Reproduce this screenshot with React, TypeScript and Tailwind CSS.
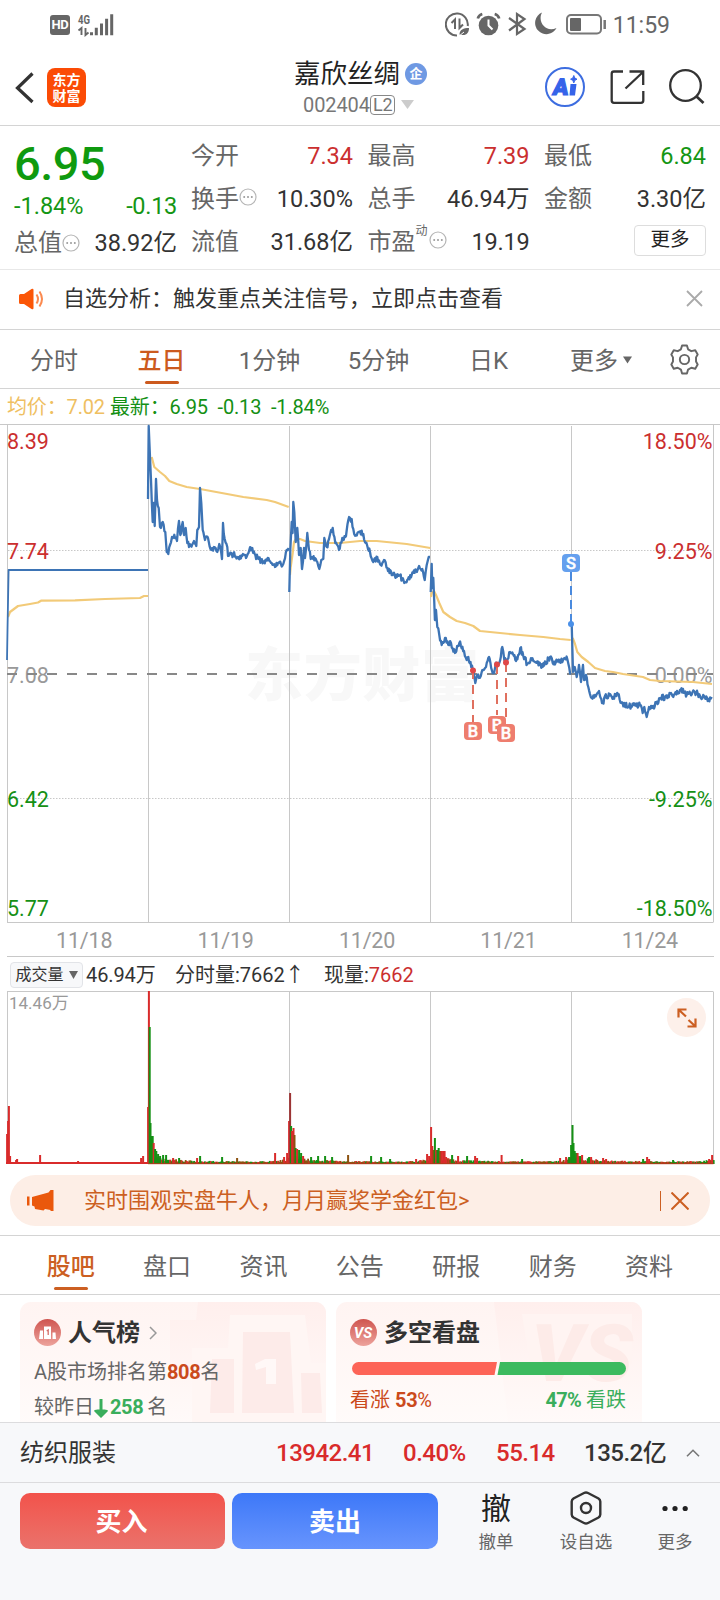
import React from 'react';

type Pt = [number, number];

const DAY_LINES = [148.5, 289.5, 430.5, 571.5];

const QUOTE_ROWS = [
  [
    { label: '今开', value: '7.34', color: 'text-[#cb2f2f]' },
    { label: '最高', value: '7.39', color: 'text-[#cb2f2f]' },
    { label: '最低', value: '6.84', color: 'text-[#149614]' },
  ],
  [
    { label: '换手', value: '10.30%', color: 'text-[#333]', more: true },
    { label: '总手', value: '46.94万', color: 'text-[#333]' },
    { label: '金额', value: '3.30亿', color: 'text-[#333]' },
  ],
];

const PERIODS = [
  { label: '分时', width: 'w-[108px]' },
  { label: '五日', width: 'w-[107px]', active: true },
  { label: '1分钟', width: 'w-[109px]' },
  { label: '5分钟', width: 'w-[109px]' },
  { label: '日K', width: 'w-[111px]' },
];

const INFO_TABS = ['股吧', '盘口', '资讯', '公告', '研报', '财务', '资料'];

// five trading days, one polyline each
const PRICE: Pt[][] = [
  [[7, 660], [7.5, 630], [8.6, 570], [148, 570]],
  [
    [148, 499], [148.7, 426], [150, 457], [151, 480], [152.7, 522], [153.7, 503], [154.7, 526], [156, 479], [157, 500],
    [158.7, 508], [160, 527], [162.7, 522], [165.3, 532], [166.7, 552], [168.3, 554], [170, 545], [172, 537], [175, 538],
    [177, 541], [179, 521], [180.3, 535], [182.7, 522], [184, 535], [185.7, 528], [187.3, 543], [190.7, 546], [194, 541],
    [196.3, 546], [197.3, 530], [199, 527], [200, 488], [201.3, 503], [202.7, 530], [205, 540], [208, 538], [211.3, 550],
    [214, 547], [217.3, 552], [219.3, 544], [222, 559], [223, 523], [224.7, 539], [227.3, 547], [228, 556], [233.3, 554],
    [237.3, 558], [243, 554], [246, 558], [249.3, 550], [252.3, 548], [254.7, 554], [258.3, 559], [263.3, 562],
    [267.7, 558], [271.7, 563], [275, 567], [278, 563], [283.3, 564], [286.7, 550], [288.7, 548],
  ],
  [
    [289.3, 592], [290.3, 550], [291.7, 522], [292.6, 533], [293.3, 502], [294.3, 512], [295.7, 542], [297.3, 528],
    [299, 555], [300.7, 548], [302, 569], [304, 548], [305, 558], [307.3, 533], [309, 550], [310.7, 559], [315, 558],
    [317.3, 562], [319.3, 569], [321.3, 560], [323.3, 559], [324.3, 538], [326.7, 547], [329, 539], [332.7, 528],
    [335.3, 543], [339, 550], [342.3, 538], [346, 536], [348.3, 520], [351.7, 519], [353.3, 529], [356, 535],
    [359.3, 532], [363.3, 534], [365.7, 543], [370, 552], [373.3, 562], [377.3, 557], [380.7, 565], [384, 560],
    [387.3, 568], [391.7, 575], [400, 575], [404.3, 583], [411.7, 575], [418.3, 568], [422.3, 569], [424.7, 580],
    [426.7, 565], [428.7, 557], [430, 557],
  ],
  [
    [430.7, 592], [431.7, 564], [432.3, 588], [433.3, 578], [434.3, 603], [434.9, 620], [436, 610], [437.3, 627],
    [439.3, 635], [441.7, 645], [445, 638], [448.3, 645], [451, 643], [455, 653], [459.3, 643], [464, 651], [466.7, 660],
    [468.3, 657], [472.7, 669], [475.3, 683], [477.3, 675], [479, 678], [481.7, 672], [486, 667], [489, 657],
    [493.3, 673], [496.7, 663], [499.3, 663], [502.3, 647], [504.3, 660], [506.7, 662], [510, 652], [513, 654],
    [516, 661], [520.3, 648], [523.3, 656], [527.3, 664], [531.7, 660], [535, 662], [542.7, 667], [550, 657],
    [552.7, 663], [560, 660], [567.3, 659], [569.3, 668], [571, 673],
  ],
  [
    [571.7, 624], [573, 672], [574.7, 667], [576.7, 677], [579, 665], [581, 682], [583, 665], [584, 680], [586, 675],
    [588.3, 687], [591.7, 698], [595, 695], [599, 691], [602.7, 703], [605, 696], [613.3, 697], [618, 694], [621.3, 703],
    [628.3, 707], [633.3, 705], [640, 705], [642.7, 713], [644.3, 707], [646.7, 717], [649, 707], [653.3, 706],
    [658.3, 703], [660, 698], [665, 697], [671, 693], [673.3, 697], [680.7, 690], [686.7, 695], [694, 691], [700, 696],
    [704, 696], [707.7, 701], [711.7, 697],
  ],
];

const AVERAGE: Pt[][] = [
  [[8, 617], [10, 612], [18, 606], [30, 604], [38, 602.5], [41, 600.7], [75, 600.3], [105, 599], [140, 598], [144, 596], [148, 596]],
  [
    [151.7, 457], [154.3, 467], [160, 472], [165, 476], [169.3, 481], [176.7, 484], [186.7, 487], [200, 489],
    [221.7, 493], [243.3, 497], [266.7, 500], [275, 502], [288.7, 507],
  ],
  [
    [290, 575], [290.7, 567], [292.7, 553], [294, 542], [295.7, 539], [300, 539], [305, 541], [320, 543], [340, 543],
    [360, 541], [376.7, 541], [406.7, 544], [430.3, 548],
  ],
  [
    [431, 597], [431.7, 593], [434, 591], [436, 595], [439.3, 603], [443.3, 612], [450, 617], [456.7, 621], [465, 623],
    [473.3, 626], [480, 631], [500, 633], [520, 635], [543.3, 637], [560, 639], [570.7, 640],
  ],
  [
    [572.7, 638], [575, 644], [577.3, 652], [581.7, 657], [588.3, 662], [595, 668], [605, 671], [613, 672], [623, 674],
    [643, 677], [650, 680], [660, 681], [693, 682], [712, 684],
  ],
];

// stable pseudo random number in 0..1
const noise = (n: number) => {
  const v = Math.sin(n * 127.1 + 3.7) * 43758.5453;
  return v - Math.floor(v);
};

const toPath = (pts: Pt[]) => 'M' + pts.map((p) => p.join(' ')).join('L');

const jagged = (pts: Pt[]) => {
  const out: Pt[] = [];
  pts.forEach((p, i) => {
    out.push(p);
    const next = pts[i + 1];
    if (!next) return;
    const steps = Math.floor((next[0] - p[0]) / 0.7);
    for (let s = 1; s < steps; s++) {
      const t = s / steps;
      const x = p[0] + (next[0] - p[0]) * t;
      const y = p[1] + (next[1] - p[1]) * t + (noise(x) - 0.5) * 6;
      out.push([+x.toFixed(1), +y.toFixed(1)]);
    }
  });
  return toPath(out);
};

const RED = '#d92b2b';
const GREEN = '#159015';
const BROWN = '#8c5210';

// x, height, color
const SPIKES: [number, number, string][] = [
  [7, 30, RED], [8, 43, RED], [8.8, 58, RED], [10, 8, RED], [16, 4, RED], [17, 5, RED], [40, 9, RED], [78, 3, RED], [141, 6, RED], [143, 8, RED],
  [148, 57, RED], [148.8, 173, RED], [149.6, 137, GREEN], [150.4, 41, GREEN], [151.6, 28, GREEN], [152.6, 28, GREEN],
  [153.6, 21, RED], [155, 15, GREEN], [156.2, 13, GREEN], [158, 10, GREEN], [160, 8, GREEN], [163, 9, GREEN], [166, 9, GREEN],
  [173, 6, RED], [179, 6, GREEN], [197, 6, RED], [200, 8, GREEN], [222, 7, GREEN], [237, 6, BROWN], [275, 11, RED],
  [284, 7, RED], [287, 11, RED], [289, 43, RED], [290, 71, '#9c3434'], [291, 38, GREEN], [292, 33, RED], [293.4, 36, RED], [294.4, 29, BROWN],
  [295.5, 16, GREEN], [297, 15, RED], [299, 14, GREEN], [301, 11, GREEN], [303, 8, RED], [311, 7, GREEN], [318, 8, GREEN],
  [325, 8, GREEN], [332, 7, GREEN], [348, 9, BROWN], [371, 8, GREEN], [381, 7, GREEN], [390, 5, GREEN], [416, 5, RED],
  [427, 10, RED], [429, 8, RED], [431, 37, RED], [432.2, 18, RED], [433.4, 14, BROWN], [434.8, 26, GREEN], [436, 14, RED],
  [437.4, 14, GREEN], [438.6, 16, GREEN], [440, 13, BROWN], [441.5, 13, RED], [443, 13, RED], [444.5, 13, RED],
  [446, 7, RED], [452, 9, GREEN], [458, 8, RED], [467, 8, GREEN], [475, 8, RED], [477, 6, RED], [501.5, 9, RED],
  [522, 5, GREEN], [560, 6, RED], [566, 7, RED], [569, 7, GREEN], [571, 19, GREEN], [572.4, 39, GREEN], [573.4, 21, GREEN],
  [574.6, 13, GREEN], [576, 11, GREEN], [577.5, 11, RED], [580, 8, GREEN], [582, 9, RED], [589, 7, GREEN], [591, 7, RED],
  [603, 6, RED], [606, 5, RED], [643, 5, GREEN], [647, 7, RED], [649, 5, RED], [673, 4, GREEN], [709, 5, RED], [712, 9, RED],
];

const VolumeBars = () => {
  const bars: React.ReactNode[] = [];
  for (let x = 150; x < 713; x += 1.2) {
    const since = (x - 148.5) % 141;
    const base = 1.5 + 7 * Math.exp(-since / 22) + (x < 571 ? 5 : 3) * Math.exp(-(141 - since) / 8);
    const h = 1.2 + base * (0.3 + 0.7 * noise(x * 1.7));
    const pick = noise(x * 3.1);
    const fill = pick < 0.35 ? GREEN : pick < 0.6 ? RED : BROWN;
    bars.push(<rect key={x} x={x} y={1164 - h} width="1.8" height={h} fill={fill} />);
  }
  return (
    <>
      <rect x="6" y="1162" width="142" height="2" fill={RED} />
      <rect x="148" y="1162.300" width="565.5" height="1.7" fill="#9a4a16" />
      {bars}
      {SPIKES.map(([x, h, fill], i) => (
        <rect key={i} x={x - 0.9} y={1164 - h} width="2" height={h} fill={fill} />
      ))}
      <path d="M148 1163.700h565.500" stroke="#b03a1c" strokeWidth="1" />
    </>
  );
};

const Bubble = () => (
  <svg className="h-[18px] w-[18px] shrink-0" viewBox="0 0 18 18">
    <circle cx="9" cy="9" r="8" fill="none" stroke="#b5b5b5" strokeWidth="1.2" />
    <circle cx="5.2" cy="9" r="1" fill="#999" />
    <circle cx="9" cy="9" r="1" fill="#999" />
    <circle cx="12.8" cy="9" r="1" fill="#999" />
  </svg>
);

const StatusBar = () => (
  <div className="flex h-[50px] items-center text-[#666]">
    <div className="ml-[50px] flex h-[20px] w-[20px] items-center justify-center rounded-[3px] bg-[#666] text-[13px] font-bold tracking-[-0.4px] text-white">HD</div>
    <svg className="ml-[7px] h-[24px] w-[38px]" viewBox="0 0 38 24">
      <text x="1" y="10.5" fontSize="12" fontWeight="700" fill="#666" textLength="12" lengthAdjust="spacingAndGlyphs">4G</text>
      <path d="M1.500 17.500l3-2.500v7M8.5 15v7l3-2.500" fill="none" stroke="#666" strokeWidth="1.900" />
      <path d="M14.5 19.2v3M19.3 14.8v7.4M24.5 10.5v11.7M29.6 5.7v16.5M34.7 1.2v21" stroke="#666" strokeWidth="3" />
    </svg>
    <div className="flex-1" />
    <svg className="h-[26px] w-[162px]" viewBox="444 12 162 26">
      <g fill="none" stroke="#666" strokeWidth="2">
        <path d="M456 35.500A11 11 0 1 1 466.700 26" />
        <path d="M450.500 23l3.500-3.500v9.500M458.500 18.500v9.500l3.500-3.500" />
      </g>
      <path d="M458.500 34.500c0-5 4-6.500 9.500-6.500 0 5-3 8.500-9.500 6.500z" fill="#666" />
      <path d="M457 37l6-5" stroke="#fff" strokeWidth="1" />
      <circle cx="487.500" cy="25.500" r="9.800" fill="#666" />
      <path d="M476.800 18.500q1-3.500 4.500-4.500M498.200 18.500q-1-3.500-4.500-4.500" stroke="#666" strokeWidth="2.700" fill="none" />
      <path d="M487.500 19.500v6l4 4" stroke="#fff" strokeWidth="2" fill="none" />
      <path d="M508 18l15.500 11-7.500 5V14l7.500 5L508 30.500" fill="none" stroke="#666" strokeWidth="2.200" />
      <path d="M541 12.500a11.300 11.300 0 1 0 14.500 15.500C545 33 536 22 541 12.500z" fill="#666" />
      <rect x="566" y="15" width="34" height="18.500" rx="4" fill="none" stroke="#777" strokeWidth="2" />
      <rect x="569" y="18" width="11" height="13" rx="1" fill="#666" />
      <path d="M603.700 20v9" stroke="#777" strokeWidth="2.500" />
    </svg>
    <span className="ml-[6px] mr-[50px] text-[23px] leading-none">11:59</span>
  </div>
);

const Header = () => (
  <div className="flex h-[76px] items-center border-b border-[#d4d4d4]">
    <svg className="ml-[15px] h-[32px] w-[19px]" viewBox="0 0 19 32">
      <path d="M17.500 1.500L2.500 16l15 14" fill="none" stroke="#333" strokeWidth="3.200" />
    </svg>
    <div className="ml-[13px] flex h-[39px] w-[39px] flex-col items-center justify-center rounded-[8px] bg-[#fb4b05] text-[14px] font-bold leading-[16px] text-white">
      <span>东方</span>
      <span>财富</span>
    </div>
    <div className="ml-[194px] flex w-[150px] flex-col pb-[2px] pl-[14px]">
      <div className="flex h-[36px] items-center whitespace-nowrap">
        <span className="text-[26.5px] leading-[36px] text-[#222]">嘉欣丝绸</span>
        <span className="ml-[5px] flex h-[22px] w-[22px] shrink-0 items-center justify-center rounded-full bg-[#6f99e3] text-[13px] font-bold leading-none text-white">企</span>
      </div>
      <div className="flex h-[26px] items-center pl-[9px] text-[20px] text-[#777]">
        <span className="w-[67px] tracking-[-0.1px]">002404</span>
        <span className="flex h-[20px] items-center rounded-[4px] border border-[#888] px-[2px] text-[18px] leading-none tracking-[-0.3px]">L2</span>
        <svg className="ml-[6px] h-[9px] w-[13px]" viewBox="0 0 13 9"><path d="M0 0h13L6.500 9z" fill="#ccc" /></svg>
      </div>
    </div>
    <div className="flex-1" />
    <svg className="h-[42px] w-[162px]" viewBox="544 67 162 42">
      <circle cx="565" cy="87" r="19" fill="none" stroke="#3d6de0" strokeWidth="2" />
      <text x="0" y="0" fontSize="23" fontWeight="900" fill="#3563e9" stroke="#3563e9" strokeWidth="1.200" textLength="15.500" lengthAdjust="spacingAndGlyphs" transform="translate(552 95) skewX(-8)">A</text>
      <path d="M570.500 84h6l-1.500 11.500h-5.500z" fill="#3563e9" />
      <path d="M573.800 75.500q.4 3.300 3.200 3.700-2.800.4-3.200 3.700-.4-3.300-3.200-3.700 2.800-.4 3.200-3.700z" fill="#3563e9" stroke="#3563e9" />
      <path d="M623 71.500h-9q-2.300 0-2.300 2.300v26.700q0 2.300 2.300 2.300h27q2.300 0 2.300-2.300V91M629.500 71.500h13.700V85M643 72L625.500 88.500" fill="none" stroke="#333" strokeWidth="2.300" />
      <circle cx="685.500" cy="85.500" r="15.300" fill="none" stroke="#333" strokeWidth="2.300" />
      <path d="M696 96l7.500 7" stroke="#333" strokeWidth="2.700" />
    </svg>
    <div className="w-[14px]" />
  </div>
);

const Quote = () => (
  <div className="flex h-[144px] border-b border-[#e8e8e8] pl-[14px] text-[24px] leading-[42px]">
    <div className="flex w-[163px] flex-col pt-[13px]">
      <div className="h-[47px] text-[47px] font-medium leading-[49px] tracking-[-0.5px] text-[#0f9a0f]">6.95</div>
      <div className="flex h-[40px] items-center justify-between text-[23.5px] text-[#149614]">
        <span>-1.84%</span>
        <span className="tracking-[-0.3px]">-0.13</span>
      </div>
      <div className="flex h-[33px] items-center">
        <span className="text-[#666]">总值</span>
        <Bubble />
        <span className="ml-auto text-[23.500px] text-[#333]">38.92亿</span>
      </div>
    </div>
    <div className="ml-[14px] flex flex-1 flex-col pt-[8px]">
      {QUOTE_ROWS.map((row, i) => (
        <div key={i} className="grid h-[43px] grid-cols-[162px_162px_162px] gap-x-[14.500px]">
          {row.map((cell) => (
            <div key={cell.label} className="flex items-center">
              <span className="text-[#666]">{cell.label}</span>
              {cell.more && <span className="-mt-[4px] flex"><Bubble /></span>}
              <span className={`ml-auto text-[23.5px] ${cell.color}`}>{cell.value}</span>
            </div>
          ))}
        </div>
      ))}
      <div className="grid h-[43px] grid-cols-[162px_162px_162px] gap-x-[14.500px]">
        <div className="flex items-center">
          <span className="text-[#666]">流值</span>
          <span className="ml-auto text-[23.500px] text-[#333]">31.68亿</span>
        </div>
        <div className="flex items-center">
          <span className="text-[#666]">市盈</span>
          <span className="-mt-[22px] text-[12px] leading-none text-[#666]">动</span>
          <span className="-mt-[4px] ml-[1px] flex"><Bubble /></span>
          <span className="ml-auto text-[23.500px] tracking-[-0.2px] text-[#333]">19.19</span>
        </div>
        <div className="flex items-center justify-end pb-[3px]">
          <div className="flex h-[31px] w-[72px] items-center justify-center rounded-[4px] border border-[#ddd] text-[19.500px] text-[#222]">更多</div>
        </div>
      </div>
    </div>
  </div>
);

const Notice = () => (
  <div className="flex h-[60px] items-center border-b border-[#d4d4d4]">
    <svg className="-mt-[2px] ml-[19px] h-[22px] w-[26px]" viewBox="0 0 26 22">
      <path d="M0 7.500q0-1.500 1.500-1.500H5L12.500 1q2-1 2 1v18q0 2-2 1L5 16H1.500Q0 16 0 14.500z" fill="#fb5607" />
      <path d="M17.500 6.500q3 4.500 0 9M20.500 3.500q5 7.500 0 15" fill="none" stroke="#fb8a50" strokeWidth="2" />
    </svg>
    <span className="-mt-[1px] ml-[18px] text-[22px] leading-[30px] text-[#333]">自选分析：触发重点关注信号，立即点击查看</span>
    <svg className="-mt-[2px] ml-auto mr-[17px] h-[17px] w-[17px]" viewBox="0 0 17 17">
      <path d="M1 1l15 15M16 1L1 16" stroke="#aaa" strokeWidth="1.800" />
    </svg>
  </div>
);

const PeriodTabs = () => (
  <div className="flex h-[59px] border-b border-[#d4d4d4] text-[24px] text-[#666]">
    {PERIODS.map((p) => (
      <div key={p.label} className={`flex flex-col items-center pt-[11px] ${p.width}`}>
        <span className={`leading-[40px] ${p.active ? 'font-medium text-[#cc5a1e]' : ''}`}>{p.label}</span>
        {p.active && <span className="h-[3px] w-[34px] rounded-full bg-[#cc5a1e]" />}
      </div>
    ))}
    <div className="flex h-[40px] items-center pl-[26px] pt-[22px]">
      <span className="leading-[40px]">更多</span>
      <svg className="-mt-[2px] ml-[5px] h-[8px] w-[9px]" viewBox="0 0 10 8"><path d="M0 0h10L5 8z" fill="#666" /></svg>
    </div>
    <svg className="ml-auto mr-[20px] mt-[14px] h-[31px] w-[31px]" viewBox="0 0 31 32" fill="none" stroke="#666" strokeWidth="2" strokeLinejoin="round">
      <path d="M13 1.500h5l1.200 4 3.300 1.900 4.100-1 2.500 4.400-1.700 3v4.300l1.700 3-2.500 4.400-4.100-1-3.300 1.900-1.200 4h-5l-1.200-4-3.300-1.900-4.100 1-2.500-4.400 1.700-3v-4.300l-1.700-3 2.500-4.400 4.100 1 3.300-1.900z" />
      <circle cx="15.500" cy="16" r="4.800" />
    </svg>
  </div>
);

const Marker = ({ x, y, label, color }: { x: number; y: number; label: string; color: string }) => (
  <g>
    <rect x={x - 9} y={y - 9} width="18" height="18" rx="4" fill={color} />
    <text x={x} y={y + 6} textAnchor="middle" fontSize="16.500" fontWeight="500" fill="#fff" stroke="#fff" strokeWidth="0.400">{label}</text>
  </g>
);

const PriceChart = () => (
  <svg className="block h-[499px] w-[720px]" viewBox="0 424 720 499">
    <text x="245" y="696" fontSize="58" fontWeight="900" fill="#f8f8f8" textLength="234">东方财富</text>
    <g stroke="#c8c8c8">
      <path d="M0 424.500h720M7 922.500h706.500" />
      <path d="M7.500 425v497M713.500 425v497" />
      {DAY_LINES.map((x) => <path key={x} d={`M${x} 426v496`} />)}
      <path d="M8 550.500h705M8 798.500h705" strokeDasharray="1.500 1.500" />
    </g>
    <g fontSize="21.500">
      <g fill="#cb2f2f">
        <text x="7" y="449">8.39</text>
        <text x="7" y="559">7.74</text>
        <text x="712.500" y="449" textAnchor="end">18.50%</text>
        <text x="712.500" y="559" textAnchor="end">9.25%</text>
      </g>
      <g fill="#159015">
        <text x="7" y="807">6.42</text>
        <text x="7" y="916">5.77</text>
        <text x="712.500" y="807" textAnchor="end">-9.25%</text>
        <text x="712.500" y="916" textAnchor="end">-18.50%</text>
      </g>
      <g fill="#999">
        <text x="7" y="683">7.08</text>
        <text x="712.500" y="683" textAnchor="end">0.00%</text>
      </g>
    </g>
    <path d="M7 674h706" stroke="#888" strokeWidth="1.800" strokeDasharray="10 10" />
    {AVERAGE.map((pts, i) => <path key={i} d={toPath(pts)} fill="none" stroke="#f2ca78" strokeWidth="2.200" strokeLinejoin="round" />)}
    {PRICE.map((pts, i) => (
      <path key={i} d={i === 0 ? toPath(pts) : jagged(pts)} fill="none" stroke="#3d74b5" strokeWidth={i === 0 ? 1.8 : 2.3} strokeLinejoin="round" />
    ))}
    <g stroke="#e0705f" strokeWidth="2" strokeDasharray="9 6">
      <path d="M473 670v52M497 665v50M506 663v60" />
    </g>
    <g fill="#e04848">
      <circle cx="473" cy="670.500" r="3" />
      <circle cx="497" cy="664.500" r="3" />
      <circle cx="506" cy="662.500" r="3" />
    </g>
    <path d="M571 572v51" stroke="#4a8ade" strokeWidth="2" strokeDasharray="9 5" />
    <circle cx="571" cy="624" r="3" fill="#4a90e8" />
    <Marker x={473} y={731} label="B" color="#ee7d6e" />
    <Marker x={497} y={725} label="B" color="#ee7d6e" />
    <Marker x={506} y={733} label="B" color="#ee7d6e" />
    <Marker x={571} y={563} label="S" color="#65a0ee" />
  </svg>
);

const VolumeChart = () => (
  <div className="relative h-[175px]">
    <svg className="block h-[175px] w-[720px]" viewBox="0 991 720 175">
      <g stroke="#c8c8c8">
        <path d="M7 991.500h706.500M7.500 992v172M713.500 992v172" />
        {DAY_LINES.map((x) => <path key={x} d={`M${x} 992v172`} />)}
      </g>
      <text x="9" y="1009" fontSize="17" fill="#999">14.46万</text>
      <VolumeBars />
    </svg>
    <div className="absolute right-[14px] top-[7px] flex h-[39px] w-[39px] items-center justify-center rounded-full bg-[#fdf0ea]">
      <svg className="h-[20px] w-[20px]" viewBox="0 0 20 20" fill="none" stroke="#cc5f22" strokeWidth="2.200">
        <path d="M9.500 1.500h-8v8M1.500 1.500L9 8.500M10.500 18.500h8v-8M18.500 18.500L11.500 12" />
      </svg>
    </div>
  </div>
);

const Promo = () => (
  <div className="mx-[10px] mt-[9px] flex h-[51px] items-center rounded-full bg-[#fdeee6]">
    <svg className="-mt-[1px] ml-[17px] h-[23px] w-[27px]" viewBox="0 0 27 23" fill="#ea580c">
      <path d="M0 7.500h2.500v9H0zM5 8L21.500 3.500 23.500 1h3v21h-3v-1l-5.500-1-1.500 1.500L8 20l-.500-2.500L5 16.500z" />
    </svg>
    <span className="ml-[30px] text-[22px] leading-[30px] text-[#cc5f22]">实时围观实盘牛人，月月赢奖学金红包&gt;</span>
    <span className="ml-auto h-[20px] w-[1px] bg-[#cc5f22]" />
    <svg className="ml-[10px] mr-[21px] h-[18px] w-[18px]" viewBox="0 0 18 18">
      <path d="M.5 .5l17 17M17.500 .5l-17 17" stroke="#cc5f22" strokeWidth="2" />
    </svg>
  </div>
);

const InfoTabs = () => (
  <div className="mt-[9px] flex h-[60px] border-y border-[#d4d4d4] pl-[22.500px] text-[24px] text-[#666]">
    {INFO_TABS.map((tab, i) => (
      <div key={tab} className="flex w-[96.400px] flex-col items-center pt-[11px]">
        <span className={`leading-[40px] ${i === 0 ? 'font-medium text-[#cc5f22]' : ''}`}>{tab}</span>
        {i === 0 && <span className="h-[3px] w-[34px] rounded-full bg-[#cc5f22]" />}
      </div>
    ))}
  </div>
);

const Cards = () => (
  <div className="flex h-[127px] gap-[10px] overflow-hidden pl-[20px] pt-[7px] text-[20px] text-[#666]">
    <div className="relative h-[140px] w-[306px] overflow-hidden rounded-[11px] bg-gradient-to-b from-[#fff4f2] to-[#fffcfb] px-[14px] pt-[13px]">
      <svg className="absolute left-[150px] top-0 h-[120px] w-[156px]" viewBox="170 1302 156 120">
        <defs>
          <linearGradient id="fade" x1="0" y1="0" x2="0" y2="1">
            <stop offset="0" stopColor="#ffefed" />
            <stop offset="1" stopColor="#fffaf9" />
          </linearGradient>
        </defs>
        <path d="M198 1302h128v120H170v-102h26z" fill="url(#fade)" />
        <path d="M230 1315h75l6 48h15v59H192v-74h36z" fill="#fff6f4" />
        <path d="M243 1332h47l4 81h-52zM212 1359h22v54h-24zM301 1373h19l2 40h-20z" fill="#fdebe9" />
        <path d="M255 1364l10-5h11v25h-10v-17l-10 3z" fill="#fff8f7" />
      </svg>
      <div className="relative flex h-[36px] items-center">
        <svg className="-mt-[2px] h-[27px] w-[27px]" viewBox="0 0 27 27">
          <defs>
            <linearGradient id="badge" x1="0" y1="0" x2="0" y2="1">
              <stop offset="0" stopColor="#cf5550" />
              <stop offset="1" stopColor="#eda39c" />
            </linearGradient>
          </defs>
          <circle cx="13.500" cy="13.500" r="13.500" fill="url(#badge)" />
          <path d="M6 11.500h3v8.500H5zM10 7.500h7v12.500h-7zM18.500 13.500h3l.5 6.500h-3.500z" fill="#fff" />
          <path d="M12.700 12l1.500-1v5" stroke="#d4706a" fill="none" strokeWidth="1.300" />
        </svg>
        <span className="ml-[7px] text-[24px] font-bold leading-[36px] text-[#333]">人气榜</span>
        <svg className="ml-[9px] h-[14px] w-[8px]" viewBox="0 0 8 14"><path d="M1 1l6 6-6 6" fill="none" stroke="#999" strokeWidth="1.500" /></svg>
      </div>
      <div className="relative mt-[6px] h-[30px] leading-[30px]">
        A股市场排名第<span className="font-bold tracking-[-0.4px] text-[#cb4a1c]">808</span>名
      </div>
      <div className="relative mt-[5px] flex h-[30px] items-center leading-[30px]">
        较昨日
        <svg className="mt-[3px] h-[19px] w-[14px]" viewBox="0 0 14 19"><path d="M5.500 0h3v10.500Q14 10 14 12L7 19 0 12q0-2 5.500-1.500z" fill="#3aae5c" /></svg>
        <span className="ml-[2px] font-bold tracking-[-0.4px] text-[#3aae5c]">258</span>
        <span className="ml-[4px]">名</span>
      </div>
    </div>
    <div className="relative h-[140px] w-[306px] overflow-hidden rounded-[11px] bg-gradient-to-b from-[#fff4f2] to-[#fffcfb] px-[14px] pt-[13px]">
      <svg className="absolute left-[150px] top-0 h-[120px] w-[156px]" viewBox="486 1302 156 120">
        <path d="M494 1302h148v120H508z" fill="url(#fade)" />
        <path d="M522 1314h110v50H530z" fill="#fff4f2" />
        <text x="531" y="1381" fontSize="80" fontWeight="900" fontStyle="italic" fill="#fdebe8" textLength="102" lengthAdjust="spacingAndGlyphs">VS</text>
      </svg>
      <div className="relative flex h-[36px] items-center">
        <svg className="-mt-[2px] h-[27px] w-[27px]" viewBox="0 0 27 27">
          <circle cx="13.500" cy="13.500" r="13.500" fill="url(#badge)" />
          <text x="13" y="19" textAnchor="middle" fontSize="15" fontWeight="700" fontStyle="italic" fill="#fff">VS</text>
        </svg>
        <span className="ml-[7px] text-[24px] font-bold leading-[36px] text-[#333]">多空看盘</span>
      </div>
      <svg className="relative ml-[2px] mt-[11px] block h-[13px] w-[274px]" viewBox="0 0 274 13">
        <path d="M6.500 0H145l-2.500 13h-136a6.500 6.500 0 0 1 0-13z" fill="#fd6457" />
        <path d="M148 0h119.500a6.500 6.500 0 0 1 0 13h-122z" fill="#3cba5f" />
      </svg>
      <div className="relative mt-[10px] flex w-[276px] justify-between leading-[30px]">
        <span className="text-[#cb4a1c]">看涨 <b className="tracking-[-0.3px]">53</b>%</span>
        <span className="text-[#3aae5c]"><b className="tracking-[-0.7px]">47%</b> 看跌</span>
      </div>
    </div>
  </div>
);

const SectorRow = () => (
  <div className="flex h-[61px] items-center border-y border-[#dcdcde] bg-[#f7f8fa] pl-[20px] pt-[1px] text-[24px] font-medium leading-[40px] tracking-[-0.5px] text-[#d92b2b]">
    <span className="w-[256px] font-normal tracking-normal text-[#333]">纺织服装</span>
    <span className="w-[127px]">13942.41</span>
    <span className="w-[93px]">0.40%</span>
    <span className="w-[88px]">55.14</span>
    <span className="w-[102px] text-[#333]">135.2亿</span>
    <svg className="h-[8px] w-[14px]" viewBox="0 0 14 8"><path d="M1 7.300l6-6 6 6" fill="none" stroke="#777" strokeWidth="1.600" /></svg>
  </div>
);

const TradeBar = () => (
  <div className="flex h-[118px] items-start bg-[#f7f8fa] pl-[20px] pt-[10px]">
    <button className="h-[56px] w-[205px] rounded-[10px] bg-gradient-to-b from-[#f2524b] to-[#ea726b] pr-[2px] pt-[2px] text-[26px] font-bold text-white">买入</button>
    <button className="ml-[7px] h-[56px] w-[206px] rounded-[10px] bg-gradient-to-b from-[#3d78f8] to-[#6794fd] pt-[2px] text-[26px] font-bold text-white">卖出</button>
    <div className="ml-[28px] flex w-[60px] flex-col items-center">
      <span className="h-[36px] text-[30px] leading-[32px] text-[#222]">撤</span>
      <span className="text-[17.500px] leading-[26px] text-[#666]">撤单</span>
    </div>
    <div className="ml-[30px] flex w-[60px] flex-col items-center">
      <svg className="-mt-[2px] h-[34px] w-[32px]" viewBox="0 0 32 34" fill="none" stroke="#333" strokeWidth="2.400">
        <path d="M16 1.500q1 0 2 .5l10.500 5.500q1.800 1.200 1.800 3v13q0 1.800-1.800 3L18 32q-2 1-4 0L3.500 26.500q-1.800-1.200-1.800-3v-13q0-1.800 1.800-3L14 2q1-.5 2-.5z" />
        <circle cx="16" cy="17" r="5" />
      </svg>
      <span className="mt-[4px] whitespace-nowrap text-[17.500px] leading-[26px] text-[#666]">设自选</span>
    </div>
    <div className="ml-[29px] flex w-[60px] flex-col items-center">
      <svg className="h-[36px] w-[26px]" viewBox="0 0 26 36" fill="#222">
        <circle cx="3" cy="15.500" r="2.600" />
        <circle cx="13" cy="15.500" r="2.600" />
        <circle cx="23.200" cy="15.500" r="2.600" />
      </svg>
      <span className="text-[17.500px] leading-[26px] text-[#666]">更多</span>
    </div>
  </div>
);

export default function App() {
  return (
    <div className="h-[1600px] w-[720px] overflow-hidden bg-white font-[Roboto,'Noto_Sans_CJK_SC',sans-serif]">
      <StatusBar />
      <Header />
      <Quote />
      <Notice />
      <PeriodTabs />
      <div className="flex h-[35px] items-center whitespace-pre pl-[7px] pt-[1px] text-[20px] leading-[30px] tracking-[-0.15px] text-[#149014]">
        <span className="text-[#efbf62]">均价：7.02</span>
        <span className="ml-[5px]">最新：6.95  -0.13  -1.84%</span>
      </div>
      <PriceChart />
      <div className="ml-[7px] mr-[6px] flex h-[34px] items-center border-b border-[#c8c8c8] pt-[4px] text-[21.500px] text-[#999]">
        {['11/18', '11/19', '11/20', '11/21', '11/24'].map((d) => (
          <span key={d} className="flex-1 pl-[13px] text-center tracking-[-0.2px]">{d}</span>
        ))}
      </div>
      <div className="flex h-[34px] items-center pl-[10px] pt-[1px] text-[20px] leading-[30px] text-[#333]">
        <div className="flex h-[26px] w-[73px] items-center justify-center gap-[5px] rounded-[4px] border border-[#e2e4e8] bg-[#f7f8fa] text-[16px] leading-none">
          成交量
          <svg className="h-[8px] w-[9px]" viewBox="0 0 9 8"><path d="M0 0h9L4.500 8z" fill="#666" /></svg>
        </div>
        <span className="ml-[3px] w-[89px] tracking-[-0.1px]">46.94万</span>
        <span className="w-[149px]">分时量:7662↑</span>
        <span>现量:<span className="text-[#cb2f2f]">7662</span></span>
      </div>
      <VolumeChart />
      <Promo />
      <InfoTabs />
      <Cards />
      <SectorRow />
      <TradeBar />
    </div>
  );
}
